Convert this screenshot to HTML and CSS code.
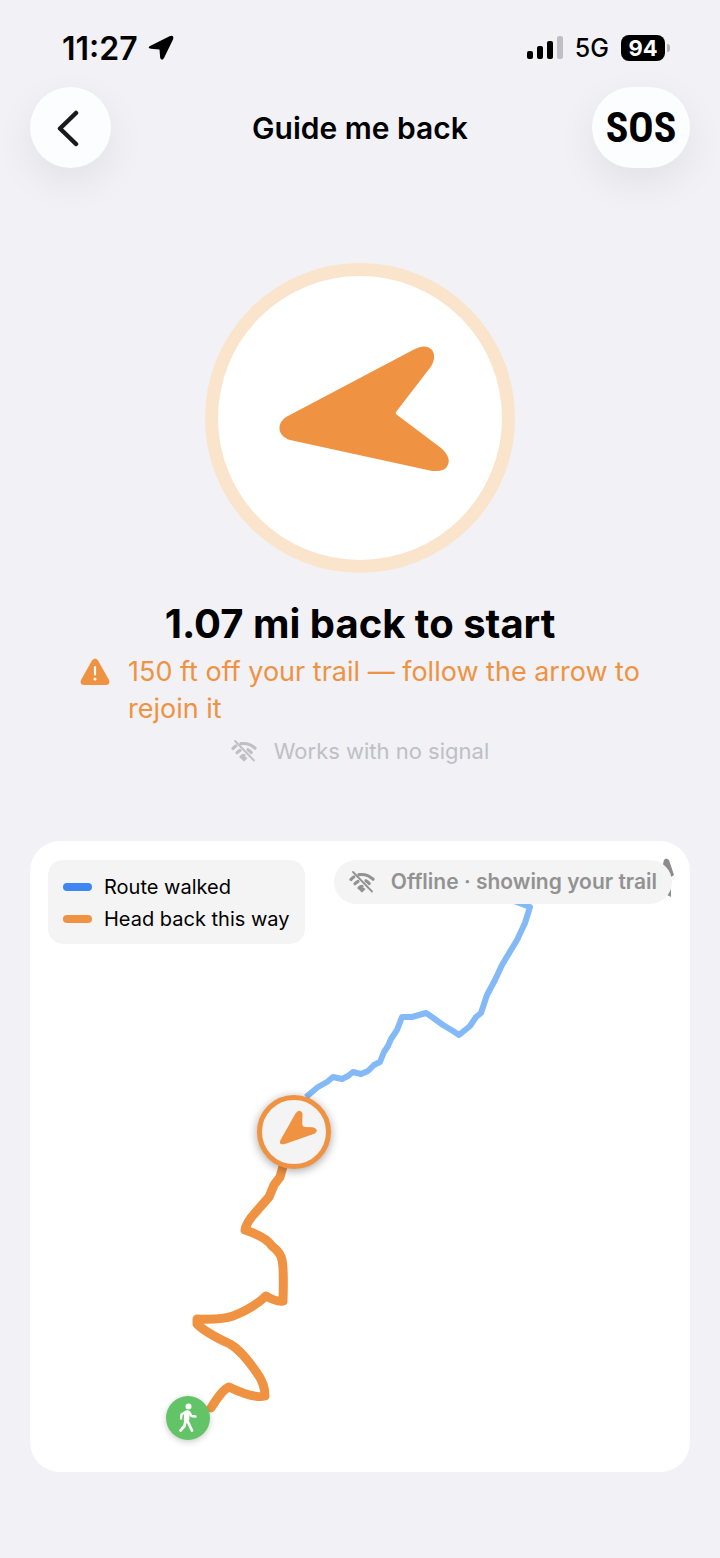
FILE: index.html
```html
<!DOCTYPE html>
<html lang="en">
<head>
    <meta charset="UTF-8">
    <meta name="viewport" content="width=device-width, initial-scale=1.0">
    <title>Guide me back</title>
    <link rel="stylesheet" href="styles.css">
</head>
<body>
    <!-- shared icon -->
    <svg class="defs" width="0" height="0" aria-hidden="true">
        <symbol id="wifi-off" viewBox="0 0 26 24">
            <g fill="none" stroke="currentColor" stroke-width="3.200" stroke-linecap="round">
                <path d="M2 9.500 Q3.200 8 4.800 7"/>
                <path d="M10 4.700 Q18 3.500 24 9.200"/>
                <path d="M6 13.800 Q7.200 12.400 9 11.500"/>
                <path d="M17 10.800 Q18.800 11.800 20.200 13.500"/>
                <path d="M10 17.800 Q11.500 16.300 13 16.300"/>
            </g>
            <path d="M9.500 19 Q13 15.500 16.500 19 L14 21.800 Q13 22.800 12 21.800 Z" fill="currentColor"/>
            <path d="M4 2 L23 21.500" stroke="currentColor" stroke-width="1.800" stroke-linecap="round"/>
        </symbol>
    </svg>

    <div class="status-bar">
        <div class="status-left">
            <span class="time">11:27</span>
            <svg width="26" height="26" viewBox="0 0 26 26" aria-hidden="true">
                <path d="M2 11 L21.500 1.300 Q26.500 -0.500 25 4.500 L16 23 Q14 26.500 12.200 23 L11.500 14.500 L3 13.800 Q-1 13 2 11 Z"/>
            </svg>
        </div>
        <div class="status-right">
            <svg width="36" height="24" viewBox="0 0 36 24" aria-hidden="true">
                <rect x="0" y="15" width="6" height="8" rx="2"/>
                <rect x="10" y="10" width="6" height="13" rx="2"/>
                <rect x="20" y="5" width="6" height="18" rx="2"/>
                <rect x="30" y="0" width="6" height="23" rx="2" fill="#c0c0c4"/>
            </svg>
            <span class="network">5G</span>
            <span class="battery">94</span>
        </div>
    </div>

    <header class="nav-bar">
        <button class="nav-btn back-btn" type="button" aria-label="Back">
            <svg width="24" height="38" viewBox="0 0 24 38" aria-hidden="true">
                <path d="M20 4 L4 19.500 L20 35" fill="none" stroke="#1a1a1a" stroke-width="4.500" stroke-linecap="round" stroke-linejoin="round"/>
            </svg>
        </button>
        <h1>Guide me back</h1>
        <button class="nav-btn sos-btn" type="button">SOS</button>
    </header>

    <main>
        <section class="guide">
            <svg class="compass" width="310" height="310" viewBox="0 0 310 310" role="img" aria-label="Direction arrow">
                <circle cx="155" cy="155" r="148.500" fill="#fff" stroke="#fbe4cc" stroke-width="13"/>
                <path d="M82 153.500 L207 87.500 C218 81 224 83.500 227 87 C230 91 230 97 226 103.500 L191 149 Q190 150.300 191.500 151.500 L236 185 C243 191 246 198 242 203.500 C239 208 233 208.500 226 207.700 L85 177 C72 173 71 160 82 153.500 Z" fill="#ef9342"/>
            </svg>
            <h2>1.07 mi back to start</h2>
            <p class="warning">
                <svg width="30" height="28" viewBox="0 0 30 28" aria-hidden="true">
                    <path d="M12 2.500 Q15 -1.500 18 2.500 L29 22 Q30.500 26.500 26 27 L4 27 Q-0.500 26.500 1 22 Z" fill="#ef9342"/>
                    <path d="M15 9 V16.500" stroke="#fff" stroke-width="2.200" stroke-linecap="round"/>
                    <circle cx="15" cy="21" r="1.500" fill="#fff"/>
                </svg>
                <span>150 ft off your trail — follow the arrow to rejoin it</span>
            </p>
            <p class="no-signal">
                <svg width="26" height="24" aria-hidden="true"><use href="#wifi-off"/></svg>
                <span>Works with no signal</span>
            </p>
        </section>

        <section class="map-card">
            <svg class="map" viewBox="0 0 660 631" role="img" aria-label="Trail map">
                <!-- compass needle, partly under the offline pill -->
                <path d="M632 27 L634 19 Q636 16 639 19 L644 34 L641 36 Z M637 54 L641 47 L641 56 Z" fill="#8c8c8c"/>
                <!-- route walked -->
                <path d="M484 60 L500 66 L495 82 L487 99 L472 124 L465 139 L457 154 L451 172 L446 176 L440 185 L429 194 L423 190 L413 184 L402 176 L396 172 L382 176 L372 176 L367 189 L361 198 L358 205 L354 211 L350 221 L344 224 L338 230 L331 233 L323 231 L318 235 L312 238 L303 236 L297 241 L288 246 L276 256" fill="none" stroke="#84b9f7" stroke-width="6" stroke-linejoin="round"/>
                <!-- way back -->
                <path d="M254 322 L250 336 L244 344 L239 356 L225 372 Q216 382 215 389 Q236 396 242 405 Q251 412 252 419 Q254 428 253 460 Q246 461 236 455 Q222 468 203 475 Q192 479 167 478 L167 483 Q176 492 200 503 Q212 510 227 532 Q235 543 235 555 Q224 558 199 546 Q192 549 181 567" fill="none" stroke="#ef9342" stroke-width="9" stroke-linecap="round" stroke-linejoin="round"/>
                <g class="pin-here">
                    <circle cx="264" cy="291" r="34.500" fill="#f5f4f4" stroke="#ef9342" stroke-width="5"/>
                    <path d="M250.500 299 L265.500 272.500 Q269 267.500 272.500 272 L272.300 283.500 Q272.500 285.800 275 286 L283 286.300 Q289.500 288.500 285 292.500 L255 303 Q248 304.500 250.500 299 Z" fill="#ef9342"/>
                </g>
                <g class="pin-start">
                    <circle cx="158" cy="577" r="22" fill="#62c466"/>
                    <circle cx="158.500" cy="565.500" r="3" fill="#fff"/>
                    <g fill="none" stroke="#fff" stroke-linecap="round" stroke-linejoin="round">
                        <path d="M157 572 L156.500 578.500" stroke-width="5.500"/>
                        <path d="M155.500 571 L151.500 573.500 L151 577.500 M159 571 L161.500 575 L165.500 575.500" stroke-width="2.400"/>
                        <path d="M157.500 580 L162 589.500 M155.500 580 L154.500 585 L150.500 589.500" stroke-width="2.800"/>
                    </g>
                </g>
            </svg>
            <ul class="legend">
                <li><span class="swatch walked"></span>Route walked</li>
                <li><span class="swatch back"></span>Head back this way</li>
            </ul>
            <div class="offline">
                <svg width="26" height="24" aria-hidden="true"><use href="#wifi-off"/></svg>
                <span>Offline · showing your trail</span>
            </div>
        </section>
    </main>
</body>
</html>
```
FILE: styles.css
```css
* {
    box-sizing: border-box;
    margin: 0;
    padding: 0;
}

body {
    background-color: #f1f1f6;
    color: #000;
    font-family: Inter, "Liberation Sans", sans-serif;
}

svg {
    display: block;
    flex-shrink: 0;
}

.defs {
    position: absolute;
}

.status-bar {
    display: flex;
    justify-content: space-between;
    align-items: center;
    padding: 28px 52px 0 62px;
    height: 68px;
}

.status-left,
.status-right {
    display: flex;
    align-items: center;
    gap: 10px;
}

.status-right {
    gap: 12px;
}

.time {
    font-size: 32px;
    font-weight: 600;
}

.network {
    font-size: 25px;
    font-weight: 500;
}

.battery {
    position: relative;
    width: 44px;
    margin-right: 3px;
    border-radius: 8px;
    background-color: #000;
    color: #fff;
    font-size: 22px;
    font-weight: 700;
    line-height: 26px;
    text-align: center;
}

.battery::after {
    content: "";
    position: absolute;
    top: 9px;
    right: -5px;
    width: 3px;
    height: 8px;
    border-radius: 0 3px 3px 0;
    background-color: #b4b4b8;
}

.nav-bar {
    display: grid;
    grid-template-columns: 1fr auto 1fr;
    align-items: center;
    padding: 19px 30px 0;
}

.nav-bar h1 {
    font-size: 30px;
    font-weight: 600;
    line-height: 40px;
}

.nav-btn {
    display: flex;
    align-items: center;
    justify-content: center;
    height: 81px;
    border: none;
    border-radius: 41px;
    background-color: #fcfdff;
    color: #000;
    box-shadow: 0 14px 40px rgba(0, 0, 0, 0.07);
    cursor: pointer;
}

.back-btn {
    width: 81px;
    padding-right: 6px;
}

.sos-btn {
    justify-self: end;
    width: 98px;
    font-family: "Liberation Sans Narrow", "Roboto Condensed", Roboto, sans-serif;
    font-size: 42px;
    font-weight: 700;
}

.guide {
    display: flex;
    flex-direction: column;
    align-items: center;
    padding: 95px 80px 0;
}

.guide h2 {
    margin-top: 26px;
    font-size: 40px;
    font-weight: 700;
    line-height: 50px;
}

.warning {
    display: flex;
    gap: 18px;
    margin-top: 4px;
    color: #ef9342;
    font-size: 27px;
    line-height: 37px;
}

.warning svg {
    margin-top: 5px;
}

.no-signal {
    display: flex;
    align-items: center;
    gap: 17px;
    margin-top: 10px;
    color: #bfbfc4;
    font-size: 22px;
    line-height: 28px;
}

.map-card {
    position: relative;
    margin: 76px 30px 86px;
    border-radius: 30px;
    background-color: #fff;
    overflow: hidden;
}

.map {
    width: 100%;
    height: auto;
}

.pin-here {
    filter: drop-shadow(0 2px 5px rgba(0, 0, 0, 0.35));
}

.pin-start {
    filter: drop-shadow(0 2px 3px rgba(0, 0, 0, 0.2));
}

.legend {
    position: absolute;
    top: 19px;
    left: 18px;
    padding: 11px 16px 9px 15px;
    border-radius: 15px;
    background-color: #f4f4f4;
    list-style: none;
    font-size: 20px;
    line-height: 32px;
}

.legend li {
    display: flex;
    align-items: center;
    gap: 12px;
}

.swatch {
    width: 29px;
    height: 8px;
    border-radius: 4px;
}

.walked {
    background-color: #3f86f5;
}

.back {
    background-color: #ef9342;
}

.offline {
    position: absolute;
    top: 19px;
    right: 18px;
    display: flex;
    align-items: center;
    gap: 16px;
    padding: 0 15px;
    border-radius: 22px;
    background-color: #f4f4f4;
    color: #929292;
    font-size: 21px;
    font-weight: 600;
    line-height: 44px;
}
```
